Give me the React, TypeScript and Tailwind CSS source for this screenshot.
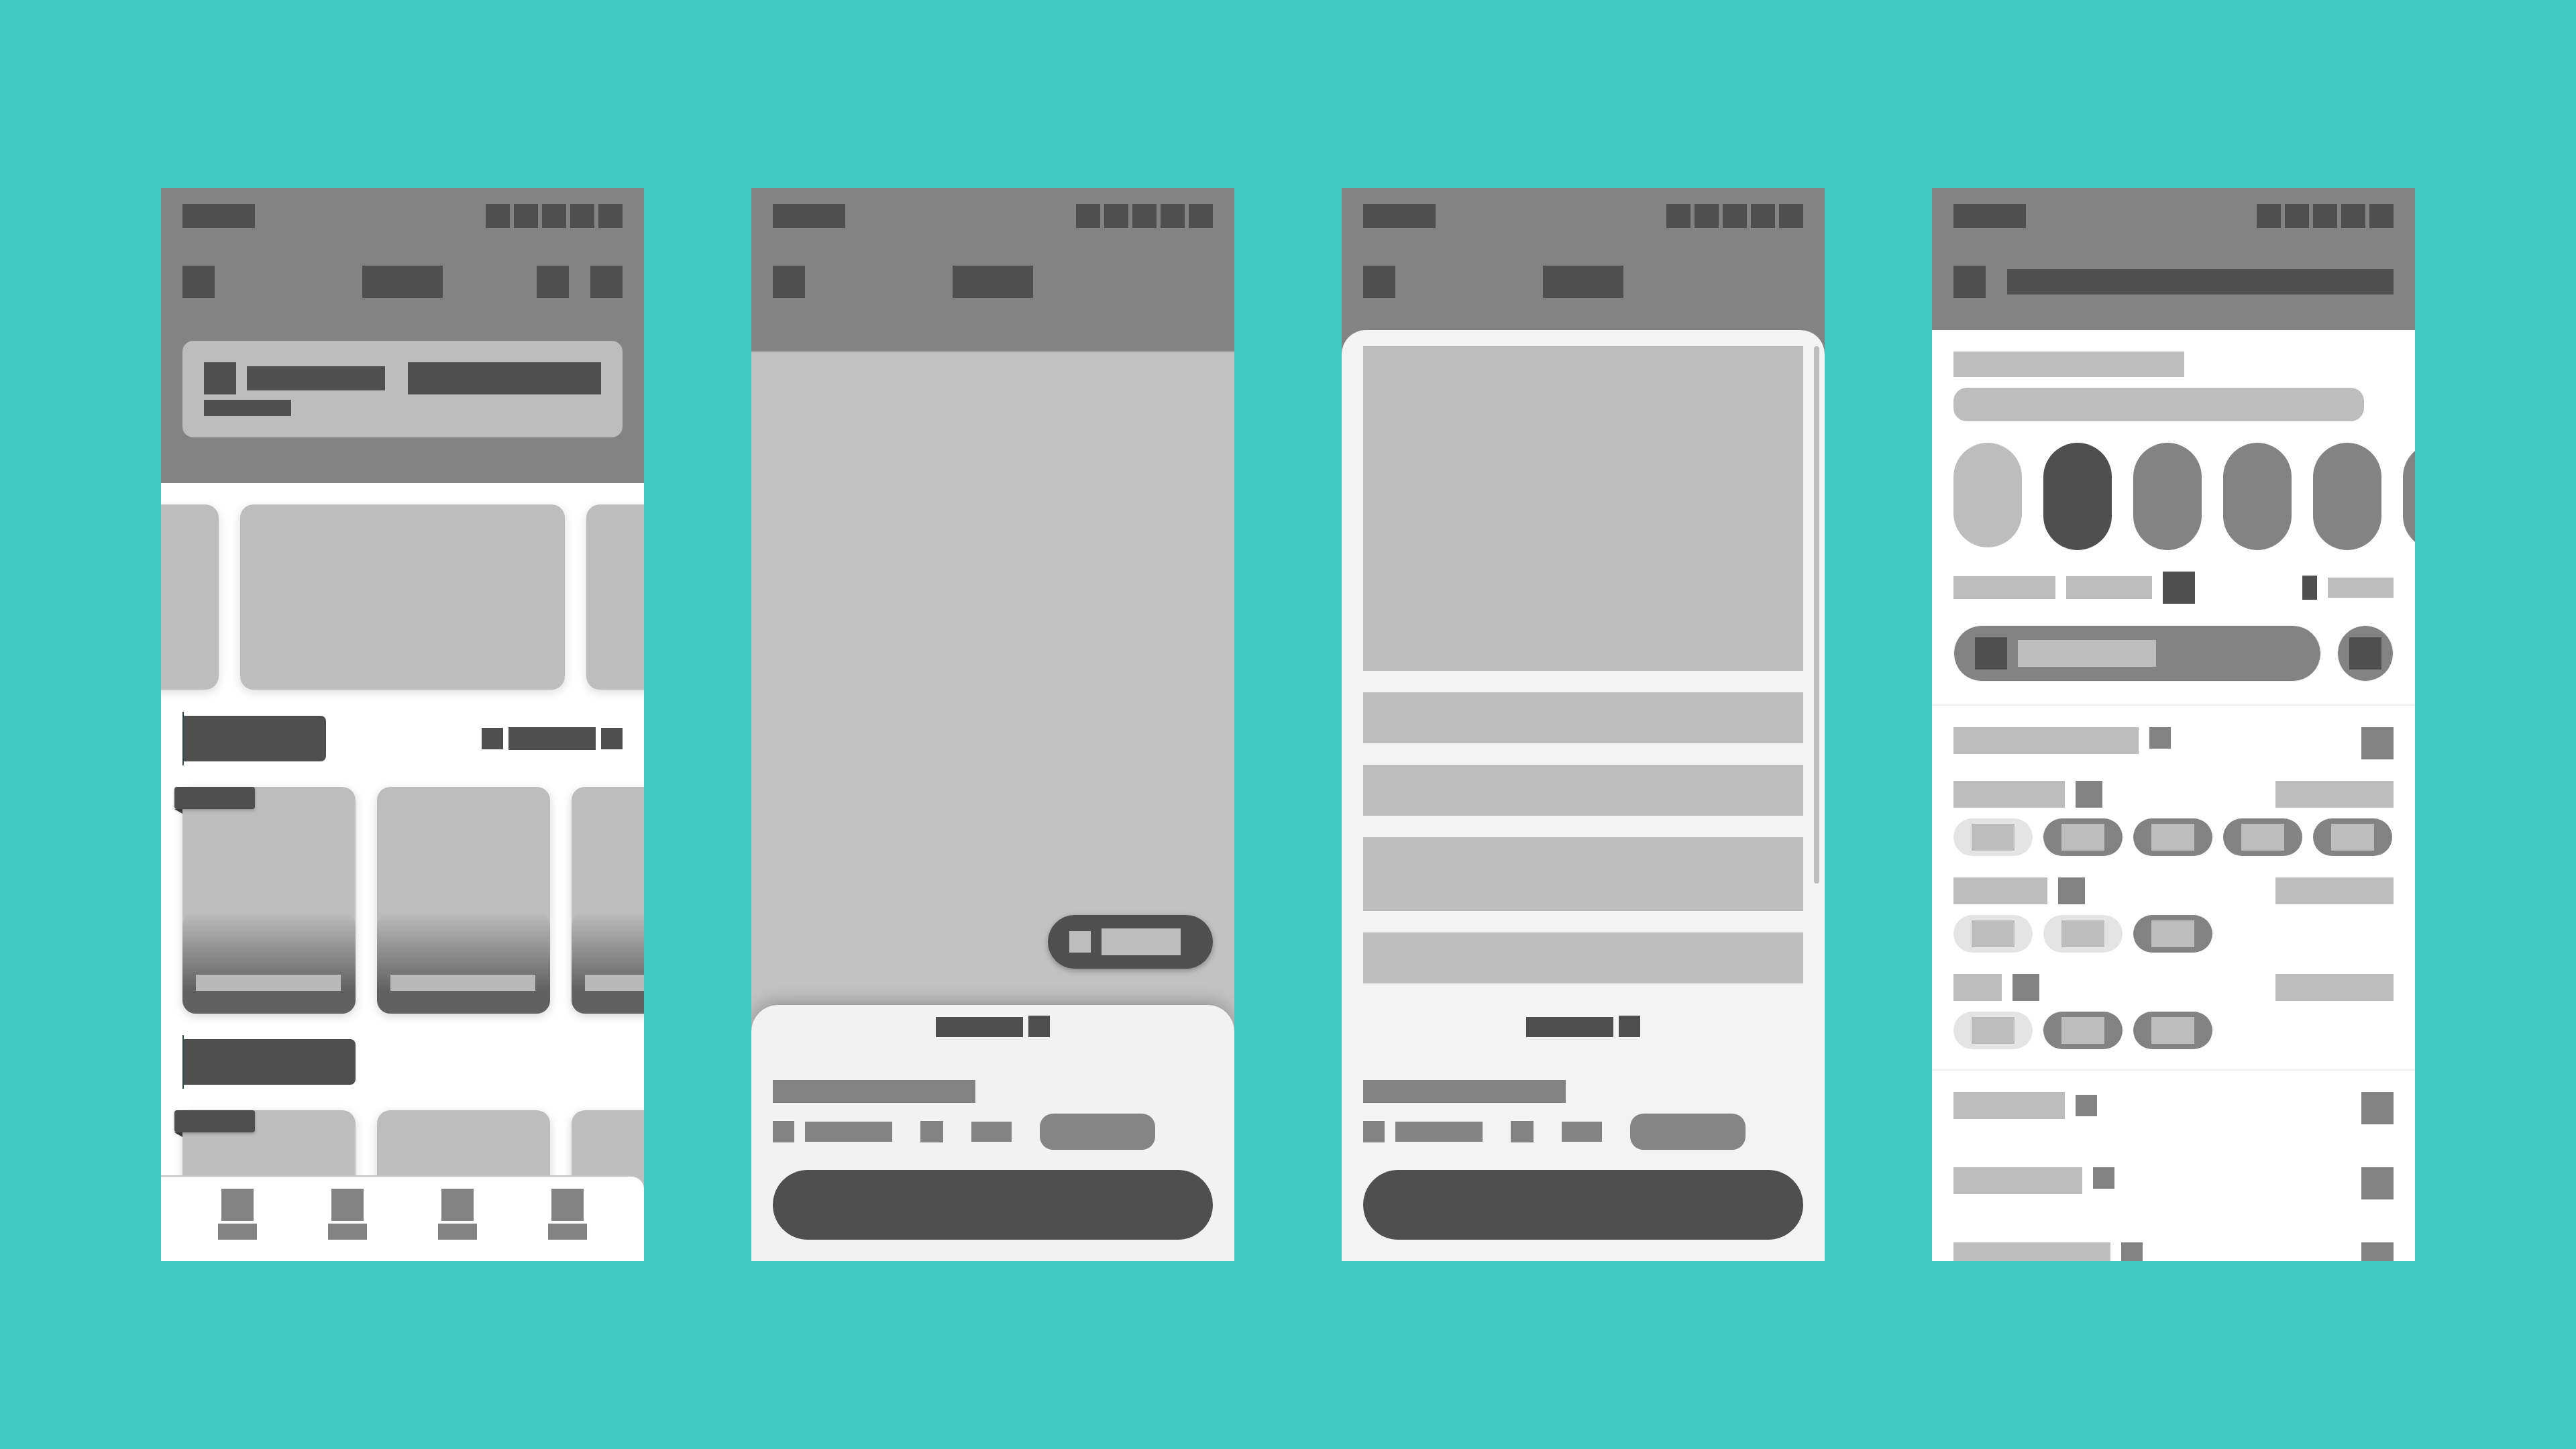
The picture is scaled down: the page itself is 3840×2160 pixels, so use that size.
import React from "react";

const D = "bg-[#4f4f4f]";

function StatusBar() {
  return (
    <div className="flex items-center justify-between px-8 pt-6">
      <div className={`h-9 w-[108px] ${D}`} />
      <div className="flex gap-[6px]">
        {[0, 1, 2, 3, 4].map((i) => (
          <div key={i} className={`h-9 w-9 ${D}`} />
        ))}
      </div>
    </div>
  );
}

function NavRow({ right }: { right?: boolean }) {
  return (
    <div className="mt-14 grid h-12 grid-cols-[1fr_auto_1fr] items-center px-8">
      <div className={`h-12 w-12 ${D}`} />
      <div className={`h-12 w-[120px] ${D}`} />
      <div className="flex justify-end gap-8">
        {right && (
          <>
            <div className={`h-12 w-12 ${D}`} />
            <div className={`h-12 w-12 ${D}`} />
          </>
        )}
      </div>
    </div>
  );
}

function SheetFooter() {
  return (
    <div className="flex flex-col px-8 pt-4 pb-8">
      <div className="flex items-end justify-center gap-2">
        <div className={`h-[30px] w-[130px] ${D}`} />
        <div className={`h-8 w-8 ${D}`} />
      </div>
      <div className="mt-16 h-[34px] w-[302px] bg-[#838383]" />
      <div className="mt-4 flex h-[54px] items-center">
        <div className="h-8 w-8 bg-[#838383]" />
        <div className="ml-4 h-[30px] w-[130px] bg-[#838383]" />
        <div className="ml-[42px] h-8 w-[34px] bg-[#838383]" />
        <div className="ml-[42px] h-[30px] w-[60px] bg-[#838383]" />
        <div className="ml-[42px] h-[54px] w-[172px] rounded-[20px] bg-[#858585]" />
      </div>
      <div className={`mt-[30px] h-[104px] rounded-full ${D}`} />
    </div>
  );
}

function TallCard({ badge }: { badge?: boolean }) {
  return (
    <div className="relative h-[338px] w-[258px] shrink-0 rounded-[20px] bg-[#bdbdbd] shadow-[0_4px_14px_rgba(0,0,0,0.16)]">
      <div className="absolute inset-x-0 bottom-0 flex h-[151px] items-end rounded-[20px] bg-[linear-gradient(to_bottom,rgba(97,97,97,0),#616161_77%)] pb-[34px] pl-5">
        <div className="h-6 w-[216px] bg-[#b9b9b9]" />
      </div>
      {badge && (
        <div className="absolute -left-3 top-0">
          <div className={`h-[33px] w-[120px] rounded-[4px] ${D} shadow-[0_2px_4px_rgba(0,0,0,0.25)]`} />
          <div className="h-0 w-0 border-l-[12px] border-t-[7px] border-l-transparent border-t-[#3a3a3a]" />
        </div>
      )}
    </div>
  );
}

function SectionTitle({ w, right }: { w: string; right?: boolean }) {
  return (
    <div className="flex h-[68px] items-center justify-between px-8">
      <div className={`relative h-[68px] ${w} rounded-r-[8px] ${D}`}>
        <div className="absolute -bottom-[6px] -top-[6px] left-0 w-[2px] bg-[#2f4646]" />
      </div>
      {right && (
        <div className="flex items-center gap-2">
          <div className={`h-8 w-8 ${D}`} />
          <div className={`h-[34px] w-[130px] ${D}`} />
          <div className={`h-8 w-8 ${D}`} />
        </div>
      )}
    </div>
  );
}

function Phone1() {
  return (
    <div className="relative flex h-[1600px] w-[720px] shrink-0 flex-col overflow-hidden bg-white">
      <div className="flex h-[440px] shrink-0 flex-col bg-[#838383]">
        <StatusBar />
        <NavRow right />
        <div className="mx-8 mt-16 flex h-[144px] flex-col rounded-[16px] bg-[#bdbdbd] p-8">
          <div className="flex h-12 items-center">
            <div className={`h-12 w-12 ${D}`} />
            <div className={`ml-4 h-9 w-[206px] ${D}`} />
            <div className={`ml-auto h-12 w-[288px] ${D}`} />
          </div>
          <div className={`mt-2 h-6 w-[130px] ${D}`} />
        </div>
      </div>
      <div className="mt-8 flex shrink-0 justify-center gap-8">
        {[0, 1, 2].map((i) => (
          <div
            key={i}
            className="h-[276px] w-[484px] shrink-0 rounded-[20px] bg-[#bdbdbd] shadow-[0_4px_14px_rgba(0,0,0,0.14)]"
          />
        ))}
      </div>
      <div className="mt-[39px] shrink-0">
        <SectionTitle w="w-[214px]" right />
      </div>
      <div className="mt-[38px] flex shrink-0 gap-8 pl-8">
        <TallCard badge />
        <TallCard />
        <TallCard />
      </div>
      <div className="mt-[38px] shrink-0">
        <SectionTitle w="w-[258px]" />
      </div>
      <div className="mt-[38px] flex shrink-0 gap-8 pl-8">
        <TallCard badge />
        <TallCard />
        <TallCard />
      </div>
      <div className="absolute inset-x-0 bottom-0 grid h-[128px] grid-cols-4 rounded-tr-[20px] border-t-2 border-[#c4c4c4] bg-white px-8">
        {[0, 1, 2, 3].map((i) => (
          <div key={i} className="flex flex-col items-center gap-1 pt-[18px]">
            <div className="h-12 w-12 bg-[#838383]" />
            <div className="h-6 w-[58px] bg-[#838383]" />
          </div>
        ))}
      </div>
    </div>
  );
}

function Phone2() {
  return (
    <div className="flex h-[1600px] w-[720px] shrink-0 flex-col overflow-hidden bg-[#c2c2c2]">
      <div className="flex h-[244px] shrink-0 flex-col bg-[#838383]">
        <StatusBar />
        <NavRow />
      </div>
      <div className="flex flex-1 items-end justify-end pb-[54px] pr-8">
        <div className={`flex h-20 w-[246px] items-center rounded-full ${D} pl-8 shadow-[0_3px_8px_rgba(0,0,0,0.3)]`}>
          <div className="h-8 w-8 bg-[#bdbdbd]" />
          <div className="ml-4 h-10 w-[118px] bg-[#bdbdbd]" />
        </div>
      </div>
      <div className="shrink-0 rounded-t-[40px] bg-[#f2f2f2] shadow-[0_-6px_24px_rgba(0,0,0,0.22)]">
        <SheetFooter />
      </div>
    </div>
  );
}

function Phone3() {
  return (
    <div className="flex h-[1600px] w-[720px] shrink-0 flex-col overflow-hidden bg-[#838383]">
      <div className="flex h-[212px] shrink-0 flex-col">
        <StatusBar />
        <NavRow />
      </div>
      <div className="flex flex-1 flex-col rounded-t-[36px] bg-[#f3f3f3]">
        <div className="flex gap-4 pl-8 pr-2 pt-6">
          <div className="flex w-[656px] flex-col gap-8">
            <div className="h-[484px] bg-[#bdbdbd]" />
            <div className="h-[76px] bg-[#bdbdbd]" />
            <div className="h-[76px] bg-[#bdbdbd]" />
            <div className="h-[110px] bg-[#bdbdbd]" />
            <div className="h-[76px] bg-[#bdbdbd]" />
          </div>
          <div className="h-[801px] w-2 rounded-full bg-[#bdbdbd]" />
        </div>
        <div className="mt-8">
          <SheetFooter />
        </div>
      </div>
    </div>
  );
}

function Chip({ light }: { light?: boolean }) {
  return (
    <div
      className={`flex h-14 w-[118px] shrink-0 items-center justify-center rounded-full ${
        light ? "bg-[#e4e4e4]" : "bg-[#838383]"
      }`}
    >
      <div className="h-10 w-16 bg-[#bdbdbd]" />
    </div>
  );
}

function FilterGroup({ bar, chips }: { bar: string; chips: boolean[] }) {
  return (
    <>
      <div className="mt-8 flex h-10 items-center justify-between">
        <div className="flex items-center gap-4">
          <div className={`h-10 ${bar} bg-[#bdbdbd]`} />
          <div className="h-10 w-10 bg-[#838383]" />
        </div>
        <div className="h-10 w-[176px] bg-[#bdbdbd]" />
      </div>
      <div className="mt-4 flex gap-4">
        {chips.map((l, i) => (
          <Chip key={i} light={l} />
        ))}
      </div>
    </>
  );
}

function ListItem({ bar, sqTop }: { bar: string; sqTop: string }) {
  return (
    <div className="flex h-12 items-start justify-between">
      <div className="flex items-start gap-4">
        <div className={`h-10 ${bar} bg-[#bdbdbd]`} />
        <div className={`h-8 w-8 bg-[#838383] ${sqTop}`} />
      </div>
      <div className="h-12 w-12 bg-[#838383]" />
    </div>
  );
}

function Phone4() {
  return (
    <div className="flex h-[1600px] w-[720px] shrink-0 flex-col overflow-hidden bg-white">
      <div className="flex h-[212px] shrink-0 flex-col bg-[#838383]">
        <StatusBar />
        <div className="mt-14 flex h-12 items-center gap-8 px-8">
          <div className={`h-12 w-12 shrink-0 ${D}`} />
          <div className={`h-[38px] flex-1 ${D}`} />
        </div>
      </div>
      <div className="flex shrink-0 flex-col px-8 pb-[34px] pt-8">
        <div className="h-[38px] w-[344px] bg-[#bdbdbd]" />
        <div className="mt-4 h-[50px] w-[612px] rounded-[20px] bg-[#bdbdbd]" />
        <div className="mt-8 flex items-start gap-8">
          <div className="h-[156px] w-[102px] shrink-0 rounded-full bg-[#bdbdbd]" />
          <div className={`h-40 w-[102px] shrink-0 rounded-full ${D}`} />
          <div className="h-40 w-[102px] shrink-0 rounded-full bg-[#838383]" />
          <div className="h-40 w-[102px] shrink-0 rounded-full bg-[#838383]" />
          <div className="h-40 w-[102px] shrink-0 rounded-full bg-[#838383]" />
          <div className="h-40 w-[102px] shrink-0 rounded-full bg-[#838383]" />
        </div>
        <div className="mt-8 flex h-12 items-center justify-between">
          <div className="flex items-center gap-4">
            <div className="h-[34px] w-[152px] bg-[#bdbdbd]" />
            <div className="h-[34px] w-[128px] bg-[#bdbdbd]" />
            <div className={`h-12 w-12 ${D}`} />
          </div>
          <div className="flex items-center gap-4">
            <div className={`h-9 w-[22px] ${D}`} />
            <div className="h-[30px] w-[98px] bg-[#bdbdbd]" />
          </div>
        </div>
        <div className="mt-8 flex h-[84px] items-center gap-6">
          <div className="flex h-[84px] flex-1 items-center rounded-full border border-[#efefef] bg-[#838383] pl-[31px]">
            <div className={`h-12 w-12 ${D}`} />
            <div className="ml-4 h-10 w-[206px] bg-[#bdbdbd]" />
          </div>
          <div className="flex h-[84px] w-[84px] shrink-0 items-center justify-center rounded-full border border-[#efefef] bg-[#838383]">
            <div className={`h-12 w-12 ${D}`} />
          </div>
        </div>
      </div>
      <div className="h-[2px] shrink-0 bg-[#f0f0f0]" />
      <div className="flex shrink-0 flex-col px-8 pb-[30px] pt-8">
        <div className="flex h-12 items-start justify-between">
          <div className="flex items-start gap-4">
            <div className="h-10 w-[276px] bg-[#bdbdbd]" />
            <div className="h-8 w-8 bg-[#838383]" />
          </div>
          <div className="h-12 w-12 bg-[#838383]" />
        </div>
        <FilterGroup bar="w-[166px]" chips={[true, false, false, false, false]} />
        <FilterGroup bar="w-[140px]" chips={[true, true, false]} />
        <FilterGroup bar="w-[72px]" chips={[true, false, false]} />
      </div>
      <div className="h-[2px] shrink-0 bg-[#f0f0f0]" />
      <div className="flex shrink-0 flex-col gap-16 px-8 pt-8">
        <ListItem bar="w-[166px]" sqTop="mt-1" />
        <ListItem bar="w-[192px]" sqTop="" />
        <ListItem bar="w-[234px]" sqTop="" />
      </div>
    </div>
  );
}

export default function App() {
  return (
    <div className="flex h-[2160px] w-[3840px] items-center justify-center gap-[160px] bg-[#42c7c3]">
      <Phone1 />
      <Phone2 />
      <Phone3 />
      <Phone4 />
    </div>
  );
}
